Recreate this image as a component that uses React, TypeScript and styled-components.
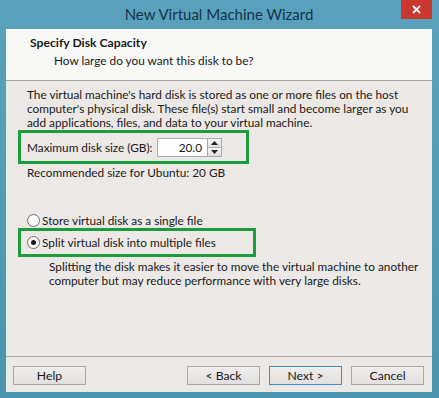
import styled, { createGlobalStyle } from 'styled-components';

const Global = createGlobalStyle`
  html, body { margin: 0; padding: 0; }
  body {
    width: 439px;
    height: 398px;
    background: #4f98b3;
    font-family: Lato, "Noto Sans", sans-serif;
    font-size: 11.8px;
    color: #1a1a1a;
    overflow: hidden;
  }
`;

const Frame = styled.div`
  width: 439px;
  height: 398px;
  display: flex;
  flex-direction: column;
  background: linear-gradient(#5aa2bc, #4b94af);
  box-sizing: border-box;
  padding: 0 7px 6px 6px;
`;

const TitleBar = styled.div`
  height: 29px;
  position: relative;
  display: flex;
  align-items: center;
  justify-content: center;
`;

const Title = styled.div`
  font-family: Lato, "Noto Sans", sans-serif;
  font-size: 15px;
  color: #15344a;
  margin-top: -2px;
`;

const CloseBtn = styled.div`
  position: absolute;
  right: 0;
  top: 0;
  width: 31px;
  height: 19px;
  background: #c9372e;
  color: #fff;
  display: flex;
  align-items: center;
  justify-content: center;
`;

const Client = styled.div`
  flex: 1;
  display: flex;
  flex-direction: column;
  background: #ebe8e5;
  white-space: nowrap;
`;

const Header = styled.div`
  height: 52px;
  background: #f8f8f7;
  border-bottom: 1px solid #a6a6a6;
  box-sizing: border-box;
  padding: 6px 0 0 24px;
`;

const HeaderTitle = styled.div`
  font-weight: 700;
  font-size: 12.2px;
  line-height: 16px;
`;

const HeaderSub = styled.div`
  padding-left: 24px;
  line-height: 19px;
`;

const Body = styled.div`
  flex: 1;
  padding: 7px 12px 0 21px;
  display: flex;
  flex-direction: column;
`;

const Para = styled.p<{ $indent?: number }>`
  margin: 0;
  line-height: 14px;
  padding-left: ${p => p.$indent ?? 0}px;
`;

const Highlight = styled.div<{ $w: number; $h: number }>`
  width: ${p => p.$w}px;
  height: ${p => p.$h}px;
  box-sizing: border-box;
  border: 3px solid #1d9c3d;
  margin-left: -9px;
  display: flex;
  align-items: center;
  padding-left: 6px;
`;

const FieldLabel = styled.span`
  width: 130px;
`;

const Spin = styled.div`
  display: flex;
  height: 19px;
`;

const SpinInput = styled.div`
  width: 50px;
  height: 19px;
  box-sizing: border-box;
  border: 1px solid #a9a9a9;
  border-right: none;
  background: #fff;
  text-align: right;
  padding-right: 5px;
  line-height: 17px;
`;

const SpinBtns = styled.div`
  width: 15px;
  display: flex;
  flex-direction: column;
  border: 1px solid #a9a9a9;
  box-sizing: border-box;
`;

const SpinBtn = styled.div`
  flex: 1;
  background: linear-gradient(#f6f6f6, #dedede);
  display: flex;
  align-items: center;
  justify-content: center;
  & + & { border-top: 1px solid #b4b4b4; }
`;

const RadioRow = styled.label`
  display: flex;
  align-items: center;
  height: 18px;
  gap: 2px;
`;

const RadioDot = styled.span<{ $on?: boolean }>`
  width: 11px;
  height: 11px;
  border-radius: 50%;
  border: 1px solid #6d6d6d;
  background: #fdfdfd;
  display: flex;
  align-items: center;
  justify-content: center;
  &::after {
    content: '';
    width: 5px;
    height: 5px;
    border-radius: 50%;
    background: ${p => (p.$on ? '#1a1a1a' : 'transparent')};
  }
`;

const Footer = styled.div`
  border-top: 1px solid #a6a6a6;
  height: 35px;
  display: flex;
  align-items: center;
  padding: 0 8px 0 7px;
  gap: 9px;
`;

const Button = styled.div<{ $default?: boolean }>`
  width: 73px;
  height: 19px;
  box-sizing: border-box;
  border: 1px solid ${p => (p.$default ? '#3c8dcf' : '#a8a8a8')};
  background: linear-gradient(#eeedec, #e2e0de);
  display: flex;
  align-items: center;
  justify-content: center;
  margin-top: 2px;
  font-size: 12.2px;
`;

const Spacer = styled.div`
  flex: 1;
`;

const Arrow = ({ up }: { up?: boolean }) => (
  <svg width="7" height="4" viewBox="0 0 7 4">
    <path d={up ? 'M0 4 L3.5 0 L7 4 Z' : 'M0 0 L3.5 4 L7 0 Z'} fill="#222" />
  </svg>
);

export default function App() {
  return (
    <>
      <Global />
      <Frame>
        <TitleBar>
          <Title>New Virtual Machine Wizard</Title>
          <CloseBtn>
            <svg width="9" height="9" viewBox="0 0 9 9">
              <path d="M1 1 L8 8 M8 1 L1 8" stroke="#fff" strokeWidth="1.8" />
            </svg>
          </CloseBtn>
        </TitleBar>
        <Client>
          <Header>
            <HeaderTitle>Specify Disk Capacity</HeaderTitle>
            <HeaderSub>How large do you want this disk to be?</HeaderSub>
          </Header>
          <Body>
            <Para>
              The virtual machine's hard disk is stored as one or more files on the host<br />
              computer's physical disk. These file(s) start small and become larger as you<br />
              add applications, files, and data to your virtual machine.
            </Para>
            <Highlight $w={231} $h={34} style={{ marginTop: 0 }}>
              <FieldLabel>Maximum disk size (GB):</FieldLabel>
              <Spin>
                <SpinInput>20.0</SpinInput>
                <SpinBtns>
                  <SpinBtn><Arrow up /></SpinBtn>
                  <SpinBtn><Arrow /></SpinBtn>
                </SpinBtns>
              </Spin>
            </Highlight>
            <Para style={{ marginTop: 2 }}>Recommended size for Ubuntu: 20 GB</Para>
            <RadioRow style={{ marginTop: 31 }}>
              <RadioDot />
              Store virtual disk as a single file
            </RadioRow>
            <Highlight $w={238} $h={29} style={{ marginTop: -1 }}>
              <RadioRow>
                <RadioDot $on />
                Split virtual disk into multiple files
              </RadioRow>
            </Highlight>
            <Para $indent={22} style={{ marginTop: 3 }}>
              Splitting the disk makes it easier to move the virtual machine to another<br />
              computer but may reduce performance with very large disks.
            </Para>
          </Body>
          <Footer>
            <Button>Help</Button>
            <Spacer />
            <Button>&lt; Back</Button>
            <Button $default>Next &gt;</Button>
            <Button>Cancel</Button>
          </Footer>
        </Client>
      </Frame>
    </>
  );
}
